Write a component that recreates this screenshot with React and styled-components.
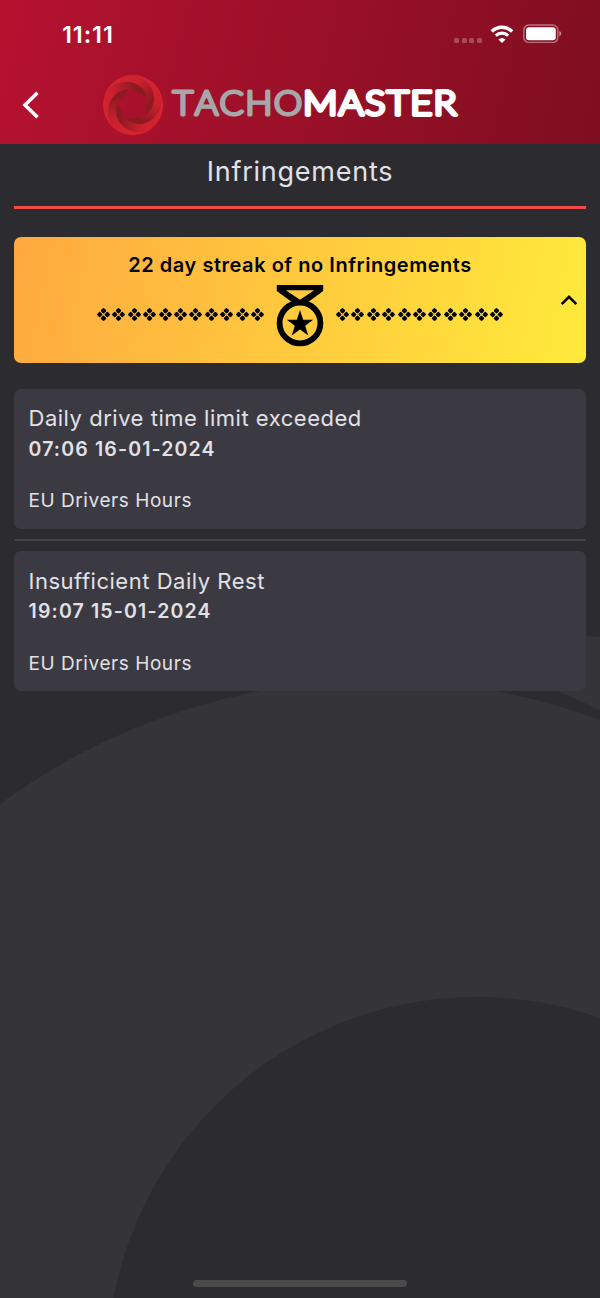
import React from "react";
import styled, { createGlobalStyle } from "styled-components";

const infringements = [
  {
    title: "Daily drive time limit exceeded",
    date: "07:06 16-01-2024",
    rule: "EU Drivers Hours",
  },
  {
    title: "Insufficient Daily Rest",
    date: "19:07 15-01-2024",
    rule: "EU Drivers Hours",
  },
];

const streakMarks = Array.from({ length: 11 }, (_, i) => i);

const blades = [0, 72, 144, 216, 288];

// one edge of a blade, winding from the rim to the hole of the ring
const spiral = (start, span) =>
  Array.from({ length: 25 }, (_, i) => {
    const t = i / 24;
    const r = 30 - 14 * (0.75 * t + 0.25 * t * t * (3 - 2 * t));
    const a = ((start + span * t) * Math.PI) / 180;
    return `${(r * Math.cos(a)).toFixed(2)} ${(r * Math.sin(a)).toFixed(2)}`;
  });

const bladePath = `M${[...spiral(180, 135), ...spiral(253, 135).reverse()].join(" L")} A30 30 0 0 0 -30 0 Z`;

const SwirlLogo = () => (
  <svg width="62" height="62" viewBox="-31 -31 62 62">
    <defs>
      <linearGradient id="blade" gradientUnits="userSpaceOnUse" x1="-20" y1="-24" x2="18" y2="-8">
        <stop offset="0" stopColor="#d6232f" />
        <stop offset="0.45" stopColor="#ca212d" />
        <stop offset="0.8" stopColor="#a51b26" />
        <stop offset="1" stopColor="#8c1820" />
      </linearGradient>
    </defs>
    {blades.map((angle) => (
      <path key={angle} transform={`rotate(${angle + 14})`} d={bladePath} fill="url(#blade)" />
    ))}
  </svg>
);

const WifiIcon = () => (
  <WifiSvg width="24" height="19" viewBox="0 0 24 19" fill="none">
    <path d="M1.8 6.4 C7.6 0.9 16.4 0.9 22.2 6.4" stroke="#fff" strokeWidth="3.5" />
    <path d="M5.8 10.6 C9.4 7.3 14.6 7.3 18.2 10.6" stroke="#fff" strokeWidth="3.2" />
    <path d="M8.4 14.5 Q12 11.4 15.6 14.5 L12 18 Z" fill="#fff" />
  </WifiSvg>
);

const BatteryIcon = () => (
  <svg width="40" height="20" viewBox="0 0 40 20">
    <rect x="0.8" y="1" width="34" height="17.4" rx="5" fill="none" stroke="#fff" strokeOpacity="0.42" strokeWidth="1.4" />
    <rect x="3" y="3.2" width="29.8" height="13" rx="3" fill="#fff" />
    <path d="M36.3 6.9 Q38.3 7.5 38.3 9.6 Q38.3 11.7 36.3 12.3 Z" fill="#fff" fillOpacity="0.5" />
  </svg>
);

const MedalIcon = () => (
  <svg width="48" height="62" viewBox="0 0 48 62">
    <path d="M0.8 0 H47.2 V6 L31.5 17.5 H16.5 L0.8 6 Z M9.8 5.2 L24 14.8 L38.2 5.2 Z" fill="#000" fillRule="evenodd" />
    <circle cx="24" cy="38" r="20.4" fill="none" stroke="#000" strokeWidth="5.8" />
    <path d="M24 25 L27.2 34.7 H37.2 L29.2 40.7 L32.3 50.5 L24 44.6 L15.7 50.5 L18.8 40.7 L10.8 34.7 H20.8 Z" fill="#000" />
  </svg>
);

const StreakMark = () => (
  <svg width="13" height="13" viewBox="-6.5 -6.5 13 13">
    {[0, 90, 180, 270].map((angle) => (
      <rect key={angle} x="-2.2" y="-2.2" width="4.4" height="4.4" rx="1.2" transform={`rotate(${angle}) translate(0 -3.8) rotate(45)`} />
    ))}
  </svg>
);

const Backdrop = () => (
  <BackdropSvg viewBox="0 0 600 1298">
    <path d="M480 635 Q560 631 600 637 V710.5 Q578 699 555 690 L500 670 Z" fill="#353439" />
    <circle cx="378" cy="1318" r="638" fill="#353439" />
    <circle cx="477" cy="1367" r="370" fill="#2c2b30" />
  </BackdropSvg>
);

export default function App() {
  return (
    <Screen>
      <GlobalStyle />
      <Backdrop />
      <Header>
        <StatusBar>
          <Clock>11:11</Clock>
          <StatusIcons>
            <Signal>
              <i />
              <i />
              <i />
              <i />
            </Signal>
            <WifiIcon />
            <BatteryIcon />
          </StatusIcons>
        </StatusBar>
        <NavBar>
          <BackButton aria-label="Back">
            <svg width="18" height="28" viewBox="0 0 18 28" fill="none">
              <path d="M15.5 1.8 L3 14 L15.5 26.2" stroke="#fff" strokeWidth="3.6" />
            </svg>
          </BackButton>
          <SwirlLogo />
          <Wordmark viewBox="0 0 296 60">
            <text x="1.5" y="41" textLength="131" lengthAdjust="spacingAndGlyphs" fill="#a7a7a9" stroke="#a7a7a9">
              TACHO
            </text>
            <text x="132" y="41" textLength="155" lengthAdjust="spacingAndGlyphs" fill="#fff" stroke="#fff" className="strong">
              MASTER
            </text>
          </Wordmark>
        </NavBar>
      </Header>
      <Content>
        <PageTitle>Infringements</PageTitle>
        <StreakCard>
          <StreakTitle>22 day streak of no Infringements</StreakTitle>
          <StreakRow>
            <Marks>
              {streakMarks.map((i) => (
                <StreakMark key={i} />
              ))}
            </Marks>
            <MedalIcon />
            <Marks>
              {streakMarks.map((i) => (
                <StreakMark key={i} />
              ))}
            </Marks>
          </StreakRow>
          <Collapse aria-label="Collapse">
            <svg width="18" height="12" viewBox="0 0 18 12" fill="none">
              <path d="M1.7 10.2 L9 2.8 L16.3 10.2" stroke="#000" strokeWidth="2.6" />
            </svg>
          </Collapse>
        </StreakCard>
        <List>
          {infringements.map((item) => (
            <Card key={item.date}>
              <CardTitle>{item.title}</CardTitle>
              <CardDate>{item.date}</CardDate>
              <CardRule>{item.rule}</CardRule>
            </Card>
          ))}
        </List>
      </Content>
      <HomeIndicator />
    </Screen>
  );
}

const GlobalStyle = createGlobalStyle`
  * {
    box-sizing: border-box;
  }
  body {
    margin: 0;
    background: #2c2b30;
    font-family: Inter, "Liberation Sans", sans-serif;
  }
  h1, h2, p {
    margin: 0;
    font-weight: 400;
    white-space: nowrap;
  }
  svg {
    display: block;
    flex: none;
  }
`;

const Screen = styled.div`
  position: relative;
  display: flex;
  flex-direction: column;
  width: 600px;
  height: 1298px;
  overflow: hidden;
  background: #2c2b30;
`;

const BackdropSvg = styled.svg`
  position: absolute;
  inset: 0;
  width: 600px;
  height: 1298px;
`;

const Header = styled.header`
  position: relative;
  height: 144px;
  flex: none;
  background: linear-gradient(104deg, #b61230 0%, #7f0e20 100%);
`;

const StatusBar = styled.div`
  display: flex;
  justify-content: space-between;
  align-items: center;
  height: 68px;
  padding: 0 37px 0 62px;
`;

const Clock = styled.span`
  color: #fff;
  font-size: 23.5px;
  font-weight: 600;
  letter-spacing: 0.9px;
`;

const StatusIcons = styled.div`
  display: flex;
  align-items: center;
  gap: 8px;
`;

const WifiSvg = styled.svg`
  margin-right: 1px;
`;

const Signal = styled.div`
  display: flex;
  gap: 2.6px;
  padding-top: 13px;

  i {
    width: 5px;
    height: 5px;
    border-radius: 1.5px;
    background: rgba(255, 255, 255, 0.25);
  }
`;

const NavBar = styled.div`
  display: flex;
  align-items: center;
  height: 74px;
  padding-left: 22px;
`;

const BackButton = styled.button`
  width: 80px;
  padding: 0;
  border: none;
  background: none;
`;

const Wordmark = styled.svg`
  width: 296px;
  height: 60px;
  margin: -3px 0 0 7px;

  text {
    font-family: Lato, sans-serif;
    font-size: 33px;
    font-weight: 300;
    font-kerning: none;
    letter-spacing: 1.2px;
    stroke-width: 3px;
    stroke-linejoin: round;
    stroke-linecap: round;
  }
  .strong {
    stroke-width: 3.8px;
  }
`;

const Content = styled.main`
  position: relative;
  padding: 0 14px;
`;

const PageTitle = styled.h1`
  height: 65px;
  border-bottom: 3px solid #f54b48;
  color: #e2e1e6;
  font-size: 27px;
  line-height: 55px;
  letter-spacing: 0.75px;
  text-align: center;
`;

const StreakCard = styled.section`
  position: relative;
  height: 126px;
  margin-top: 28px;
  padding-top: 16px;
  border-radius: 7px;
  background: linear-gradient(102deg, #ffa940 0%, #ffeb3b 100%);
`;

const StreakTitle = styled.h2`
  && {
    font-weight: 600;
  }
  color: #000;
  font-size: 20px;
  line-height: 25px;
  letter-spacing: 0.54px;
  text-align: center;
`;

const StreakRow = styled.div`
  display: flex;
  justify-content: center;
  gap: 12px;
  margin-top: 7px;
`;

const Marks = styled.div`
  display: flex;
  gap: 2.4px;
  padding-top: 23.3px;
`;

const Collapse = styled.button`
  position: absolute;
  top: 57px;
  right: 8px;
  padding: 0;
  border: none;
  background: none;
`;

const List = styled.div`
  margin-top: 25.5px;
`;

const Card = styled.article`
  position: relative;
  height: 140px;
  padding: 14.8px 14.5px;
  border-radius: 7px;
  background: #3b3a42;
  color: #e2e1e6;

  & + & {
    margin-top: 22.5px;
  }
  & + &::before {
    content: "";
    position: absolute;
    top: -12px;
    left: 0;
    right: 0;
    height: 2px;
    background: #434247;
  }
`;

const CardTitle = styled.h2`
  font-size: 22px;
  line-height: 30px;
  letter-spacing: 0.52px;
`;

const CardDate = styled.p`
  && {
    margin-top: 0.6px;
    font-weight: 600;
  }
  font-size: 19.5px;
  line-height: 30px;
  letter-spacing: 1.15px;
`;

const CardRule = styled.p`
  && {
    margin-top: 22.6px;
  }
  font-size: 19px;
  line-height: 30px;
  letter-spacing: 0.56px;
`;

const HomeIndicator = styled.div`
  position: absolute;
  bottom: 11px;
  left: 193px;
  width: 214px;
  height: 7.5px;
  border-radius: 4px;
  background: #4a4a4a;
`;
